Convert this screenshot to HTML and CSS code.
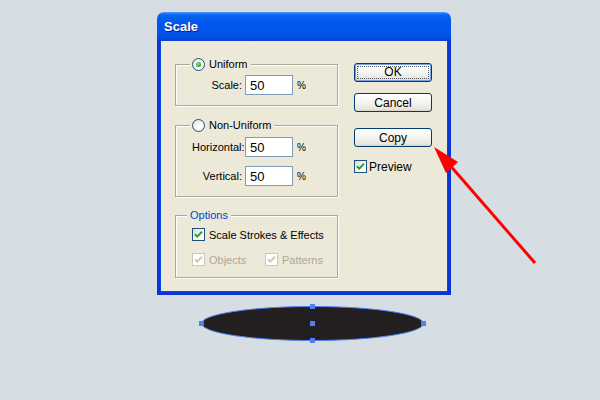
FILE: index.html
```html
<!DOCTYPE html>
<html lang="en">
<head>
    <meta charset="UTF-8">
    <title>Scale</title>
    <link rel="stylesheet" href="styles.css">
</head>
<body>

<div class="dialog">
    <div class="titlebar">Scale</div>
    <div class="dialog-body">
        <div class="groups">
            <div class="group group-uniform">
                <div class="legend"><span class="radio checked"></span>Uniform</div>
                <div class="field">
                    <label>Scale:</label>
                    <input type="text" value="50">
                    <span class="unit">%</span>
                </div>
            </div>

            <div class="group group-nonuniform">
                <div class="legend"><span class="radio"></span>Non-Uniform</div>
                <div class="field">
                    <label>Horizontal:</label>
                    <input type="text" value="50">
                    <span class="unit">%</span>
                </div>
                <div class="field field-second">
                    <label>Vertical:</label>
                    <input type="text" value="50">
                    <span class="unit">%</span>
                </div>
            </div>

            <div class="group group-options">
                <div class="legend legend-blue">Options</div>
                <div class="check-row">
                    <span class="check"><svg viewBox="0 0 11 11"><path d="M2 5.2 L4.3 7.6 L9 2.6" /></svg></span>
                    Scale Strokes &amp; Effects
                </div>
                <div class="check-row check-row-disabled">
                    <span class="check disabled"><svg viewBox="0 0 11 11"><path d="M2 5.2 L4.3 7.6 L9 2.6" /></svg></span>
                    <span class="check-label">Objects</span>
                    <span class="check disabled"><svg viewBox="0 0 11 11"><path d="M2 5.2 L4.3 7.6 L9 2.6" /></svg></span>
                    Patterns
                </div>
            </div>
        </div>

        <div class="actions">
            <button class="btn btn-default"><span>OK</span></button>
            <button class="btn btn-cancel">Cancel</button>
            <button class="btn btn-copy">Copy</button>
            <div class="check-row preview">
                <span class="check"><svg viewBox="0 0 11 11"><path d="M2 5.2 L4.3 7.6 L9 2.6" /></svg></span>
                Preview
            </div>
        </div>
    </div>
</div>

<div class="shape">
    <svg width="232" height="40" viewBox="0 0 232 40">
        <ellipse cx="115.5" cy="20.5" rx="111" ry="17" fill="#231f20" stroke="#4f80f2" stroke-width="1" />
        <rect x="2" y="18" width="5" height="5" fill="#4f80f2" />
        <rect x="224" y="18" width="5" height="5" fill="#4f80f2" />
        <rect x="113" y="1" width="5" height="5" fill="#4f80f2" />
        <rect x="113" y="35" width="5" height="5" fill="#4f80f2" />
        <rect x="113" y="18" width="5" height="5" fill="#4f80f2" />
    </svg>
</div>

<svg class="arrow" width="600" height="400" viewBox="0 0 600 400">
    <line x1="535" y1="263" x2="448" y2="163" stroke="#ff0000" stroke-width="3" />
    <polygon points="434,147 458,162 446,173" fill="#ff0000" />
</svg>

</body>
</html>
```

FILE: styles.css
```css
body {
    margin: 0;
    padding: 12px 0 0 157px;
    background-color: #d6dde3;
    font-family: "Liberation Sans", Arial, sans-serif;
    font-size: 11px;
    color: #000000;
    height: 400px;
    box-sizing: border-box;
    overflow: hidden;
}

/* window */
.dialog {
    width: 294px;
}

.titlebar {
    height: 29px;
    box-sizing: border-box;
    padding: 7px 0 0 7px;
    border-radius: 7px 7px 0 0;
    background: linear-gradient(#4a98ff 0, #0a62f0 3px, #0058ee 40%, #0053e6 80%, #0046d4 100%);
    color: #ffffff;
    font-weight: bold;
    font-size: 13px;
    text-shadow: 1px 1px 0 #0a1e8c;
}

.dialog-body {
    display: flex;
    height: 254px;
    box-sizing: border-box;
    padding: 0 0 0 15px;
    background-color: #ece9d8;
    border: 3px solid #0a35d6;
    border-top: none;
    box-shadow: inset 1px 0 0 #0a46e4, inset -1px -1px 0 #0a46e4;
}

.groups {
    width: 163px;
    padding-top: 23px;
}

/* group boxes */
.group {
    box-sizing: border-box;
    border: 1px solid #aca899;
    box-shadow: 1px 1px 0 #ffffff, inset 1px 1px 0 #ffffff;
}

.group-uniform {
    height: 42px;
}

.group-nonuniform {
    height: 72px;
    margin-top: 19px;
}

.group-options {
    height: 63px;
    margin-top: 18px;
}

.legend {
    display: flex;
    align-items: center;
    width: max-content;
    height: 14px;
    margin: -8px 0 0 14px;
    padding: 0 3px 0 2px;
    background-color: #ece9d8;
}

.legend-blue {
    color: #0046d5;
    margin-left: 11px;
    padding: 0 3px;
}

.radio {
    width: 13px;
    height: 13px;
    box-sizing: border-box;
    border: 1px solid #1c5180;
    border-radius: 50%;
    margin-right: 4px;
    background: radial-gradient(circle at 65% 65%, #ffffff 20%, #e3e1d7 90%);
    display: flex;
    align-items: center;
    justify-content: center;
}

.radio.checked::after {
    content: "";
    width: 5px;
    height: 5px;
    border-radius: 50%;
    background: radial-gradient(circle at 40% 40%, #8fe38f, #21a121 70%);
}

/* inputs */
.field {
    display: flex;
    align-items: center;
    margin-top: 4px;
    padding-left: 16px;
}

.group-nonuniform .field {
    margin-top: 5px;
}

.group-nonuniform .field-second {
    margin-top: 9px;
}

.field label {
    width: 50px;
    text-align: right;
    margin-right: 3px;
}

.field input {
    width: 48px;
    height: 20px;
    box-sizing: border-box;
    border: 1px solid #7f9db9;
    padding: 0 0 0 4px;
    margin: 0;
    font-family: "Liberation Sans", Arial, sans-serif;
    font-size: 13px;
    color: #000000;
    background-color: #ffffff;
}

.unit {
    margin-left: 4px;
    font-size: 10px;
}

/* checkboxes */
.check-row {
    display: flex;
    align-items: center;
    height: 13px;
    padding-left: 16px;
    margin-top: 6px;
}

.check-row-disabled {
    margin-top: 12px;
    color: #aca899;
}

.check-label {
    width: 56px;
}

.check {
    width: 13px;
    height: 13px;
    box-sizing: border-box;
    border: 1px solid #1c5180;
    background: linear-gradient(135deg, #dcdbd5, #ffffff 70%);
    margin-right: 4px;
    display: flex;
}

.check svg {
    width: 11px;
    height: 11px;
}

.check path {
    fill: none;
    stroke: #21a121;
    stroke-width: 2;
}

.check.disabled {
    border-color: #cac8bb;
    background: #ffffff;
}

.check.disabled path {
    stroke: #cac8bb;
}

/* buttons */
.actions {
    display: flex;
    flex-direction: column;
    width: 78px;
    margin-left: 16px;
    padding-top: 22px;
}

.btn {
    height: 19px;
    width: 78px;
    box-sizing: border-box;
    margin: 0;
    padding: 0;
    border: 1px solid #003c74;
    border-radius: 3px;
    background: linear-gradient(#ffffff 0, #f4f4f0 50%, #e6e4dc 90%, #d6d0c5 100%);
    font-family: "Liberation Sans", Arial, sans-serif;
    font-size: 12px;
    color: #000000;
}

.btn-default {
    box-shadow: inset 0 0 0 1px #7aa0e0;
    padding: 2px;
}

.btn-default span {
    display: block;
    height: 100%;
    box-sizing: border-box;
    border: 1px dotted #555555;
    line-height: 11px;
}

.btn-cancel {
    margin-top: 11px;
}

.btn-copy {
    margin-top: 16px;
}

.preview {
    padding-left: 0;
    margin-top: 13px;
    font-size: 12px;
}

.preview .check {
    margin-right: 2px;
}

/* artwork */
.shape {
    margin: 8px 0 0 40px;
    height: 40px;
}

.shape svg {
    display: block;
}

.arrow {
    position: absolute;
    left: 0;
    top: 0;
}
```
